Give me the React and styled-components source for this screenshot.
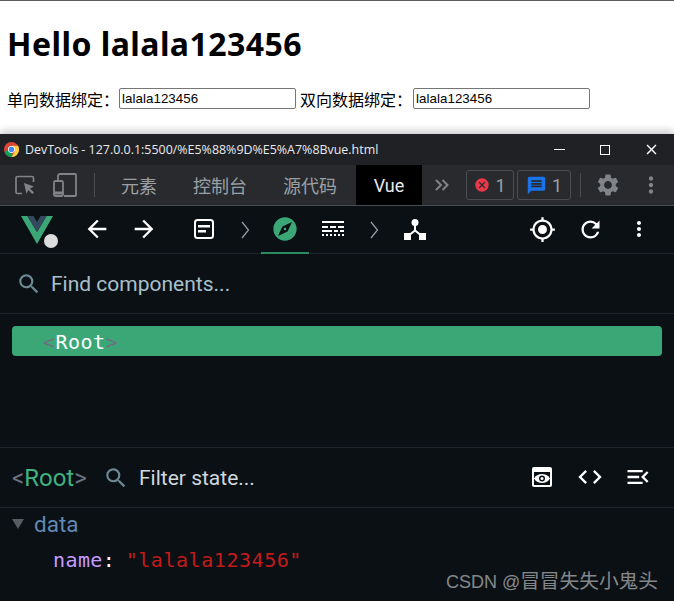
import styled, { createGlobalStyle } from 'styled-components';
import {
	MdArrowBack,
	MdArrowForward,
	MdExplore,
	MdGpsFixed,
	MdRefresh,
	MdMoreVert,
	MdSearch,
	MdCode,
	MdMenuOpen,
	MdSettings,
	MdCancel,
	MdMessage,
	MdClose,
} from 'react-icons/md';

const GlobalStyle = createGlobalStyle`
	html, body {
		margin: 0;
		padding: 0;
		background: #fff;
	}
`;

const Page = styled.div`
	display: flex;
	flex-direction: column;
	height: 601px;
	overflow: hidden;
	position: relative;
	font-family: Roboto, "Noto Sans CJK SC", sans-serif;
`;

/* --- the page under inspection --- */
const Preview = styled.div`
	height: 134px;
	flex: none;
	box-sizing: border-box;
	border-top: 1px solid #5c5c5c;
	padding: 0 8px;
	font-family: "Noto Sans", "Noto Sans CJK SC", sans-serif;
	color: #000;
`;
const Title = styled.h1`
	margin: 21px 0 21px -1px;
	font-size: 32px;
	line-height: 44px;
	font-weight: 700;
	letter-spacing: 0.45px;
`;
const Fields = styled.div`
	display: flex;
	align-items: center;
	height: 23px;
	font-size: 16px;
	margin-left: -1px;
`;
const Label = styled.label`
	font-family: "Noto Sans CJK SC", sans-serif;
	width: ${(p) => p.$width}px;
	flex: none;
`;
const Field = styled.input`
	box-sizing: border-box;
	width: 177px;
	height: 21px;
	flex: none;
	margin-right: 4px;
	border: 1px solid #767676;
	border-radius: 2px;
	padding: 1px 2px;
	font-family: "Liberation Sans", sans-serif;
	font-size: 13.33px;
	letter-spacing: 0.05px;
	color: #000;
	background: #fff;
`;

/* --- devtools window --- */
const Window = styled.div`
	flex: 1;
	display: flex;
	flex-direction: column;
	background: #0b1015;
	box-shadow: 0 -3px 8px rgba(0, 0, 0, 0.22);
	position: relative;
`;
const TitleBar = styled.div`
	height: 31px;
	flex: none;
	display: flex;
	align-items: center;
	background: #202124;
	padding-left: 4px;
	color: #e8eaed;
	font-family: "Open Sans", "Noto Sans", sans-serif;
	font-size: 12.45px;
`;
const TitleText = styled.span`
	margin-left: 6px;
	flex: 1;
	white-space: nowrap;
`;
const WinButton = styled.div`
	width: 46px;
	height: 31px;
	display: flex;
	align-items: center;
	justify-content: center;
	color: #fff;
`;

const TabBar = styled.div`
	height: 41px;
	flex: none;
	box-sizing: border-box;
	display: flex;
	align-items: stretch;
	background: #292a2d;
	border-bottom: 1px solid #494c50;
`;
const ToolIcons = styled.div`
	box-sizing: border-box;
	display: flex;
	align-items: center;
	width: ${(p) => p.$width}px;
	flex: none;
	justify-content: ${(p) => p.$justify || 'center'};
	padding: ${(p) => p.$padding || '0'};
	color: #808387;
`;
const Divider = styled.div`
	width: 1px;
	height: 24px;
	align-self: center;
	flex: none;
	background: #494c50;
	margin: ${(p) => p.$margin};
`;
const Tab = styled.div`
	display: flex;
	align-items: center;
	justify-content: center;
	flex: none;
	font-family: ${(p) => (p.$active ? 'Roboto, sans-serif' : '"Noto Sans CJK SC", sans-serif')};
	font-size: 18px;
	width: ${(p) => p.$width}px;
	margin-right: ${(p) => p.$gap || 0}px;
	color: ${(p) => (p.$active ? '#e8eaed' : '#9aa0a6')};
	background: ${(p) => (p.$active ? '#000' : 'transparent')};
`;
const Counter = styled.div`
	box-sizing: border-box;
	flex: none;
	align-self: center;
	height: 30px;
	width: ${(p) => p.$width}px;
	margin-right: 3px;
	display: flex;
	align-items: center;
	justify-content: center;
	gap: 5px;
	border: 1px solid #494c50;
	border-radius: 3px;
	color: #9aa0a6;
	font-size: 18px;
`;

const VueBar = styled.div`
	height: 48px;
	flex: none;
	box-sizing: border-box;
	display: flex;
	align-items: stretch;
	border-bottom: 1px solid #20242d;
	padding-left: 21px;
`;
const Logo = styled.div`
	width: 52px;
	flex: none;
	position: relative;
	display: flex;
	align-items: center;
`;
const Dot = styled.span`
	position: absolute;
	left: 23px;
	top: 28px;
	width: 14px;
	height: 14px;
	border-radius: 50%;
	background: #dcdcdc;
`;
const BarButton = styled.div`
	width: ${(p) => p.$width || 48}px;
	flex: none;
	box-sizing: border-box;
	display: flex;
	align-items: center;
	justify-content: center;
	color: ${(p) => (p.$active ? '#3ba776' : '#fff')};
	border-bottom: 2px solid ${(p) => (p.$active ? '#2b8a60' : 'transparent')};
	margin: ${(p) => p.$margin || '0 0 -1px'};
`;
const Crumb = styled.div`
	width: 24px;
	flex: none;
	display: flex;
	align-items: center;
	justify-content: center;
	margin: ${(p) => p.$margin || '0'};
`;
const Spacer = styled.div`
	flex: 1;
`;

const SearchBar = styled.div`
	height: 60px;
	flex: none;
	box-sizing: border-box;
	display: flex;
	align-items: center;
	gap: 9px;
	padding-left: 16px;
	border-bottom: 1px solid #20242d;
	color: #a9c0cc;
	font-size: 21px;
`;
const SearchIcon = styled(MdSearch)`
	color: #6d8895;
	flex: none;
`;

const Tree = styled.div`
	flex: 1;
	padding: 12px 12px 0;
`;
const TreeRow = styled.div`
	height: 30px;
	box-sizing: border-box;
	padding: 1px 0 0 31px;
	border-radius: 4px;
	background: #3ba776;
	display: flex;
	align-items: center;
	font-family: "DejaVu Sans Mono", monospace;
	font-size: 20px;
	letter-spacing: 0.45px;
	color: #fff;
`;
const Bracket = styled.span`
	color: ${(p) => p.$color || '#6b7280'};
`;

const FilterBar = styled.div`
	height: 61px;
	flex: none;
	box-sizing: border-box;
	display: flex;
	align-items: center;
	padding-left: 12px;
	border-top: 1px solid #20242d;
	border-bottom: 1px solid #20242d;
	font-size: 24px;
`;
const RootName = styled.div`
	color: #3fb27f;
	width: 91px;
	flex: none;
`;
const FilterText = styled.div`
	margin-left: 10px;
	font-size: 21px;
	color: #cfd8dc;
`;

const State = styled.div`
	flex: none;
	box-sizing: border-box;
	height: 93px;
	padding: 2px 0 0 12px;
`;
const DataRow = styled.div`
	display: flex;
	align-items: center;
	gap: 10px;
	height: 28px;
	font-size: 22.5px;
	color: #5f8ab3;
`;
const Arrow = styled.span`
	width: 0;
	height: 0;
	border-left: 6.5px solid transparent;
	border-right: 6.5px solid transparent;
	border-top: 10px solid #555b61;
`;
const Prop = styled.div`
	margin: 10px 0 0 41px;
	font-family: "DejaVu Sans Mono", monospace;
	font-size: 20px;
	letter-spacing: 0.4px;
	white-space: nowrap;
	color: #fff;
`;
const Key = styled.span`
	color: #c49cff;
`;
const Value = styled.span`
	color: #c41a1a;
	margin-left: -2px;
	letter-spacing: 0.55px;
`;
const Watermark = styled.div`
	position: absolute;
	right: 16px;
	bottom: 8px;
	display: flex;
	align-items: baseline;
	font-family: "Liberation Sans", sans-serif;
	font-size: 18px;
	color: rgba(255, 255, 255, 0.5);
	white-space: pre;
`;
const WatermarkCjk = styled.span`
	font-family: "Noto Sans CJK SC", sans-serif;
	font-size: 19.7px;
	line-height: 1;
`;

const ChromeLogo = () => (
	<svg width="15" height="15" viewBox="0 0 48 48">
		<circle cx="24" cy="24" r="24" fill="#db4437" />
		<path d="M3.2 36 14 17.5 24 36l10 12H24A24 24 0 0 1 3.2 36z" fill="#0f9d58" />
		<path d="M24 12h20.8A24 24 0 0 1 24 48l10.4-18z" fill="#ffcd40" />
		<circle cx="24" cy="24" r="11" fill="#fff" />
		<circle cx="24" cy="24" r="8.5" fill="#4285f4" />
	</svg>
);
const InspectIcon = () => (
	<svg width="20" height="20" viewBox="0 0 20 20" fill="none" stroke="currentColor">
		<path d="M7 18.5H2.5a1.5 1.5 0 0 1-1.5-1.5V3a1.5 1.5 0 0 1 1.5-1.5H17A1.5 1.5 0 0 1 18.500 3v4" strokeWidth="1.700" />
		<path d="M9 8l10 3.600-4 1.800 4 4-1.700 1.700-4-4-1.800 4z" fill="currentColor" stroke="none" />
	</svg>
);
const DeviceIcon = () => (
	<svg width="24" height="24" viewBox="0 0 24 24" fill="none" stroke="currentColor" strokeWidth="1.800">
		<path d="M5 7V3a2 2 0 0 1 2-2h15a1 1 0 0 1 1 1v20a1 1 0 0 1-1 1H11" />
		<rect x="1" y="8" width="9" height="15" rx="1.500" />
		<path d="M1 20h9" strokeWidth="3" />
	</svg>
);
const ChevronThin = ({ color = '#9aa0a6' }) => (
	<svg width="9" height="18" viewBox="0 0 9 18" fill="none" stroke={color} strokeWidth="1.200">
		<path d="M1 1l6.500 8L1 17" />
	</svg>
);
const DoubleChevron = () => (
	<svg width="14" height="12" viewBox="0 0 14 12" fill="none" stroke="#808387" strokeWidth="2">
		<path d="M1 1l5 5-5 5M7.500 1l5 5-5 5" />
	</svg>
);
const VueLogo = () => (
	<svg width="32" height="28" viewBox="0 0 32 28">
		<path d="M0 0h6.500L16 16 25.500 0H32L16 28z" fill="#3ba776" />
		<path d="M6.500 0h6L16 6l3.500-6h6L16 16z" fill="#35495e" />
	</svg>
);
const ArticleIcon = () => (
	<svg width="22" height="22" viewBox="0 0 22 22" fill="none">
		<rect x="2" y="2" width="18" height="18" rx="2.500" stroke="#fff" strokeWidth="2" />
		<path d="M5 7h12v2.500H5zM5 12h8v2.500H5z" fill="#fff" />
	</svg>
);
const TimelineIcon = () => (
	<svg width="22" height="20" viewBox="0 0 22 20" fill="#fff">
		<path d="M0 2h22v2H0z" />
		<path d="M0 7h6v2H0zM8 7h6v2H8zM16 7h6v2h-6z" />
		<path d="M0 11h10v2H0zM12 11h4v2h-4zM18 11h4v2h-4z" />
		<path d="M0 15h2v2H0zM4 15h2v2H4zM8 15h2v2H8zM12 15h2v2h-2zM16 15h2v2h-2zM20 15h2v2h-2z" />
	</svg>
);
const TreeIcon = () => (
	<svg width="22" height="22" viewBox="0 0 22 22" fill="#fff">
		<circle cx="11" cy="4.500" r="3.500" />
		<path d="M10 7h2v5l5 4-1.300 1.500L11 13.700 6.300 17.500 5 16l5-4z" />
		<rect x="0" y="15" width="7" height="7" />
		<rect x="15" y="15" width="7" height="7" />
	</svg>
);
const PreviewIcon = () => (
	<svg width="22" height="22" viewBox="0 0 22 22">
		<rect x="1" y="1" width="20" height="20" rx="2" fill="#fff" />
		<rect x="3" y="6" width="16" height="13" fill="#0b1015" />
		<path d="M3 12.500C5 9 8 8 11 8s6 1 8 4.500C17 16 14 17 11 17s-6-1-8-4.500z" fill="#fff" />
		<circle cx="11" cy="12.500" r="3" fill="#0b1015" />
		<circle cx="11" cy="12.500" r="1.500" fill="#fff" />
	</svg>
);

const App = () => (
	<Page>
		<GlobalStyle />
		<Preview>
			<Title>Hello lalala123456</Title>
			<Fields>
				<Label $width={112}>单向数据绑定：</Label>
				<Field readOnly value="lalala123456" />
				<Label $width={113}>双向数据绑定：</Label>
				<Field readOnly value="lalala123456" />
			</Fields>
		</Preview>
		<Window>
			<TitleBar>
				<ChromeLogo />
				<TitleText>DevTools - 127.0.0.1:5500/%E5%88%9D%E5%A7%8Bvue.html</TitleText>
				<WinButton>
					<svg width="11" height="11" viewBox="0 0 11 11" stroke="#fff"><path d="M0 5.500h11" /></svg>
				</WinButton>
				<WinButton>
					<svg width="10" height="10" viewBox="0 0 10 10" fill="none" stroke="#fff"><rect x="0.500" y="0.500" width="9" height="9" /></svg>
				</WinButton>
				<WinButton>
					<MdClose size={17} />
				</WinButton>
			</TitleBar>
			<TabBar>
				<ToolIcons $width={94} $justify="space-between" $padding="0 17px 0 15px">
					<InspectIcon />
					<DeviceIcon />
				</ToolIcons>
				<Divider $margin="0 26px 0 0" />
				<Tab $width={36} $gap={36}>元素</Tab>
				<Tab $width={54} $gap={36}>控制台</Tab>
				<Tab $width={54} $gap={19}>源代码</Tab>
				<Tab $width={66} $active>Vue</Tab>
				<ToolIcons $width={44} $padding="0 4px 0 0"><DoubleChevron /></ToolIcons>
				<Counter $width={48}>
					<MdCancel size={16} color="#e8384a" />
					1
				</Counter>
				<Counter $width={54}>
					<MdMessage size={21} color="#1a73e8" />
					1
				</Counter>
				<Divider $margin="0 0 0 6px" />
				<ToolIcons $width={53}><MdSettings size={26} /></ToolIcons>
				<ToolIcons $width={34}><MdMoreVert size={26} /></ToolIcons>
			</TabBar>
			<VueBar>
				<Logo>
					<VueLogo />
					<Dot />
				</Logo>
				<BarButton $width={47}><MdArrowBack size={28} /></BarButton>
				<BarButton><MdArrowForward size={28} /></BarButton>
				<BarButton $width={72}><ArticleIcon /></BarButton>
				<Crumb $margin="0 0 0 -7px"><ChevronThin /></Crumb>
				<BarButton $margin="0 0 -1px 4px" $active><MdExplore size={28} /></BarButton>
				<BarButton><TimelineIcon /></BarButton>
				<Crumb $margin="0 0 0 5px"><ChevronThin /></Crumb>
				<BarButton $width={58}><TreeIcon /></BarButton>
				<Spacer />
				<BarButton><MdGpsFixed size={27} /></BarButton>
				<BarButton><MdRefresh size={27} /></BarButton>
				<BarButton $width={49} $margin="0 10.5px -1px 0"><MdMoreVert size={24} /></BarButton>
			</VueBar>
			<SearchBar>
				<SearchIcon size={26} />
				Find components...
			</SearchBar>
			<Tree>
				<TreeRow>
					<Bracket>&lt;</Bracket>Root<Bracket>&gt;</Bracket>
				</TreeRow>
			</Tree>
			<FilterBar>
				<RootName>
					<Bracket>&lt;</Bracket>Root<Bracket>&gt;</Bracket>
				</RootName>
				<SearchIcon size={26} />
				<FilterText>Filter state...</FilterText>
				<Spacer />
				<BarButton><PreviewIcon /></BarButton>
				<BarButton><MdCode size={28} /></BarButton>
				<BarButton $margin="0 12px -1px 0"><MdMenuOpen size={28} /></BarButton>
			</FilterBar>
			<State>
				<DataRow>
					<Arrow />
					data
				</DataRow>
				<Prop>
					<Key>name</Key>: <Value>"lalala123456"</Value>
				</Prop>
			</State>
			<Watermark>
				CSDN @<WatermarkCjk>冒冒失失小鬼头</WatermarkCjk>
			</Watermark>
		</Window>
	</Page>
);

export default App;
